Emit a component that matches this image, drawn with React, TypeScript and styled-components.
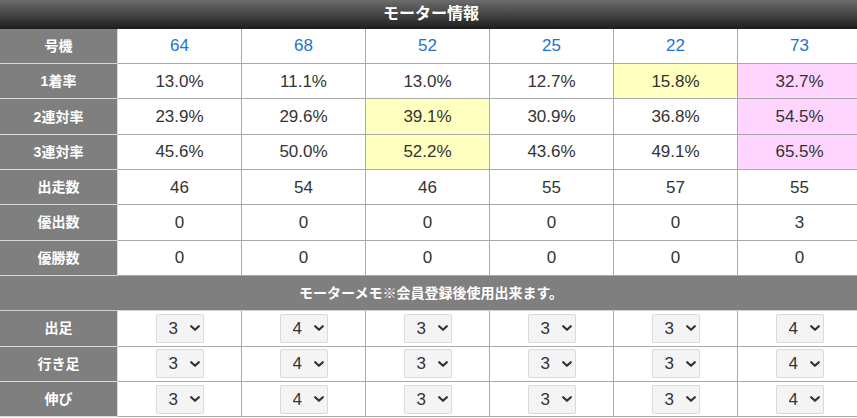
import React from "react";
import styled, { createGlobalStyle } from "styled-components";

const GlobalStyle = createGlobalStyle`
  html, body {
    margin: 0;
    padding: 0;
    overflow: hidden;
    background: #ffffff;
  }
  body {
    font-family: "Liberation Sans", "Noto Sans CJK JP", sans-serif;
    color: #333333;
  }
`;

const Table = styled.table`
  width: 861px;
  table-layout: fixed;
  border-collapse: separate;
  border-spacing: 0;
  font-family: "Liberation Sans", "Noto Sans CJK JP", sans-serif;
`;

const TitleCell = styled.th`
  height: 28.7px;
  padding: 0;
  background: linear-gradient(#6c6c6c, #1d1d1d);
  color: #ffffff;
  font-size: 16px;
  font-weight: bold;
  text-align: center;
  vertical-align: middle;
  line-height: 1;
`;

const LabelCell = styled.th`
  width: 117px;
  height: 34.33px;
  padding: 0;
  box-sizing: content-box;
  background: #7f7f7f;
  color: #ffffff;
  font-size: 14px;
  font-weight: bold;
  text-align: center;
  vertical-align: middle;
  border-right: 1px solid #d8d8d8;
  border-bottom: 1px solid #d8d8d8;
  line-height: 1;
`;

const MemoCell = styled.th`
  height: 34.33px;
  padding: 0;
  background: #7f7f7f;
  color: #ffffff;
  font-size: 14px;
  font-weight: bold;
  text-align: center;
  vertical-align: middle;
  border-bottom: 1px solid #d0d0d0;
  line-height: 1;
`;

type Tone = "none" | "yellow" | "pink";

const toneBg: Record<Tone, string> = {
  none: "#ffffff",
  yellow: "#ffffc0",
  pink: "#ffd4ff",
};

const DataCell = styled.td<{ $tone?: Tone; $blue?: boolean }>`
  height: 34.33px;
  padding: 0;
  background: ${(p) => toneBg[p.$tone ?? "none"]};
  color: ${(p) => (p.$blue ? "#1c74d2" : "#333333")};
  font-size: 17px;
  text-align: center;
  vertical-align: middle;
  border-right: 1px solid #a9a9a9;
  border-bottom: 1px solid #a9a9a9;
  line-height: 1;
`;

const SelectWrap = styled.span`
  position: relative;
  display: inline-block;
  vertical-align: middle;
`;

const Select = styled.select`
  appearance: none;
  -webkit-appearance: none;
  width: 48px;
  height: 29px;
  margin: 0;
  padding: 0 0 0 12px;
  box-sizing: border-box;
  background: #f4f4f4;
  border: 1px solid #dadada;
  border-radius: 2px;
  color: #333333;
  font-family: "Liberation Sans", sans-serif;
  font-size: 17px;
  text-align: left;
  outline: none;
`;

const Chevron = styled.svg`
  position: absolute;
  right: 4px;
  top: 11.5px;
  width: 10px;
  height: 6px;
  pointer-events: none;
`;

const machines = ["64", "68", "52", "25", "22", "73"];

type StatRow = { label: string; values: string[]; tones?: Tone[] };

const stats: StatRow[] = [
  {
    label: "1着率",
    values: ["13.0%", "11.1%", "13.0%", "12.7%", "15.8%", "32.7%"],
    tones: ["none", "none", "none", "none", "yellow", "pink"],
  },
  {
    label: "2連対率",
    values: ["23.9%", "29.6%", "39.1%", "30.9%", "36.8%", "54.5%"],
    tones: ["none", "none", "yellow", "none", "none", "pink"],
  },
  {
    label: "3連対率",
    values: ["45.6%", "50.0%", "52.2%", "43.6%", "49.1%", "65.5%"],
    tones: ["none", "none", "yellow", "none", "none", "pink"],
  },
  { label: "出走数", values: ["46", "54", "46", "55", "57", "55"] },
  { label: "優出数", values: ["0", "0", "0", "0", "0", "3"] },
  { label: "優勝数", values: ["0", "0", "0", "0", "0", "0"] },
];

const evals: { label: string; values: string[] }[] = [
  { label: "出足", values: ["3", "4", "3", "3", "3", "4"] },
  { label: "行き足", values: ["3", "4", "3", "3", "3", "4"] },
  { label: "伸び", values: ["3", "4", "3", "3", "3", "4"] },
];

function EvalSelect({ value }: { value: string }) {
  return (
    <SelectWrap>
      <Select defaultValue={value}>
        {["1", "2", "3", "4", "5"].map((v) => (
          <option key={v} value={v}>
            {v}
          </option>
        ))}
      </Select>
      <Chevron viewBox="0 0 10 6">
        <path
          d="M1.2 1.2 L5 4.8 L8.8 1.2"
          fill="none"
          stroke="#333"
          strokeWidth="2.2"
          strokeLinecap="round"
          strokeLinejoin="round"
        />
      </Chevron>
    </SelectWrap>
  );
}

export default function App() {
  return (
    <>
      <GlobalStyle />
      <Table>
        <colgroup>
          <col style={{ width: 118 }} />
          {machines.map((m) => (
            <col key={m} style={{ width: 124 }} />
          ))}
        </colgroup>
        <thead>
          <tr>
            <TitleCell colSpan={7}>モーター情報</TitleCell>
          </tr>
        </thead>
        <tbody>
          <tr>
            <LabelCell>号機</LabelCell>
            {machines.map((m) => (
              <DataCell key={m} $blue>
                {m}
              </DataCell>
            ))}
          </tr>
          {stats.map((row) => (
            <tr key={row.label}>
              <LabelCell>{row.label}</LabelCell>
              {row.values.map((v, i) => (
                <DataCell key={i} $tone={row.tones?.[i]}>
                  {v}
                </DataCell>
              ))}
            </tr>
          ))}
          <tr>
            <MemoCell colSpan={7}>モーターメモ※会員登録後使用出来ます。</MemoCell>
          </tr>
          {evals.map((row) => (
            <tr key={row.label}>
              <LabelCell>{row.label}</LabelCell>
              {row.values.map((v, i) => (
                <DataCell key={i}>
                  <EvalSelect value={v} />
                </DataCell>
              ))}
            </tr>
          ))}
        </tbody>
      </Table>
    </>
  );
}
